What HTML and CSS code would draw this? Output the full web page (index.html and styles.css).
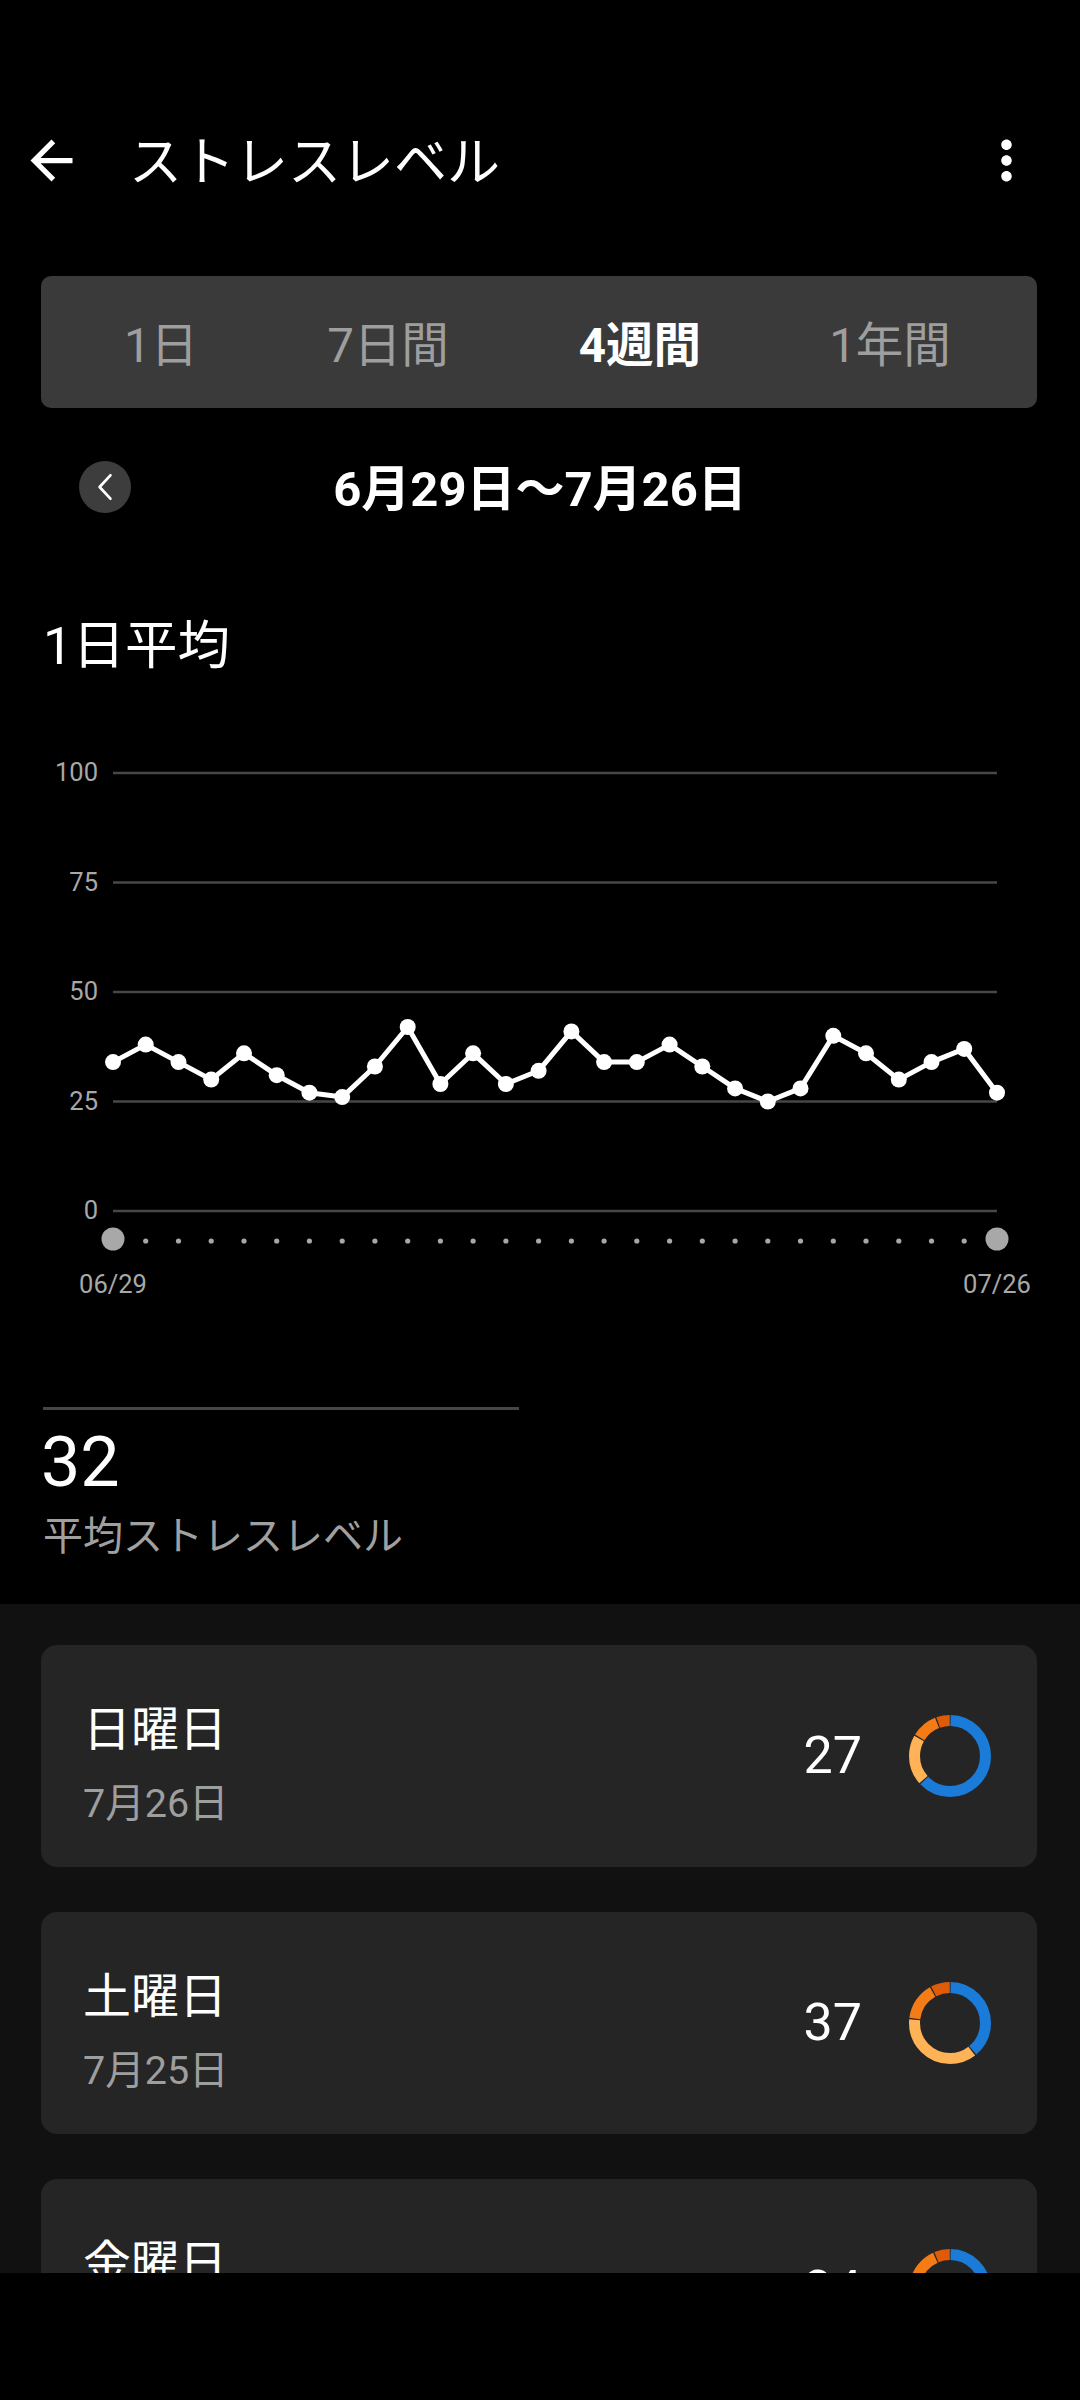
FILE: index.html
```html
<!DOCTYPE html>
<html lang="ja">
<head>
<meta charset="utf-8">
<title>ストレスレベル</title>
<link rel="stylesheet" href="styles.css">
</head>
<body>
<div class="top">
  <header class="appbar">
    <svg class="icon back" viewBox="0 0 24 24" width="63" height="63"><path fill="#fff" d="M20 11H7.83l5.59-5.59L12 4l-8 8 8 8 1.41-1.41L7.83 13H20v-2z"/></svg>
    <h1 class="title">ストレスレベル</h1>
    <svg class="icon more" viewBox="0 0 24 24" width="63" height="63"><path fill="#fff" d="M12 8c1.1 0 2-.9 2-2s-.9-2-2-2-2 .9-2 2 .9 2 2 2zm0 2c-1.1 0-2 .9-2 2s.9 2 2 2 2-.9 2-2-.9-2-2-2zm0 6c-1.1 0-2 .9-2 2s.9 2 2 2 2-.9 2-2-.9-2-2-2z"/></svg>
  </header>

  <nav class="tabs">
    <span class="tab">1日</span>
    <span class="tab">7日間</span>
    <span class="tab active">4週間</span>
    <span class="tab">1年間</span>
  </nav>

  <div class="range">
    <div class="range-left">
      <span class="prev">
        <svg viewBox="0 0 20 30" width="20" height="30"><path d="M16 2 L4 15 L16 28" fill="none" stroke="#fff" stroke-width="3" stroke-linecap="round" stroke-linejoin="round"/></svg>
      </span>
    </div>
    <div class="range-text">6月29日〜7月26日</div>
    <div></div>
  </div>

  <h2 class="section-title">1日平均</h2>

  <svg class="chart" viewBox="0 740 1080 570" width="1080" height="570">
    <g class="grid" stroke="#474747" stroke-width="2.5">
      <line x1="113" y1="773" x2="997" y2="773"/>
      <line x1="113" y1="882.5" x2="997" y2="882.5"/>
      <line x1="113" y1="992" x2="997" y2="992"/>
      <line x1="113" y1="1101.5" x2="997" y2="1101.5"/>
      <line x1="113" y1="1211" x2="997" y2="1211"/>
    </g>
    <g class="ylabels" fill="#a8a8a8" font-size="25.5" text-anchor="end">
      <text x="98" y="781">100</text>
      <text x="98" y="890.5">75</text>
      <text x="98" y="1000">50</text>
      <text x="98" y="1109.5">25</text>
      <text x="98" y="1219">0</text>
    </g>
    <polyline fill="none" stroke="#fff" stroke-width="5" stroke-linejoin="round"
      points="113,1062.1 145.7,1044.6 178.5,1062.1 211.2,1079.6 244,1053.3 276.7,1075.2 309.4,1092.7 342.2,1097.1 374.9,1066.5 407.7,1027 440.4,1084 473.1,1053.3 505.9,1084 538.6,1070.8 571.4,1031.4 604.1,1062.1 636.8,1062.1 669.6,1044.6 702.3,1066.5 735.1,1088.4 767.8,1101.5 800.5,1088.4 833.3,1035.8 866,1053.3 898.8,1079.6 931.5,1062.1 964.2,1048.9 997,1092.7"/>
    <g fill="#fff">
      <circle cx="113" cy="1062.1" r="8"/>
      <circle cx="145.7" cy="1044.6" r="8"/>
      <circle cx="178.5" cy="1062.1" r="8"/>
      <circle cx="211.2" cy="1079.6" r="8"/>
      <circle cx="244" cy="1053.3" r="8"/>
      <circle cx="276.7" cy="1075.2" r="8"/>
      <circle cx="309.4" cy="1092.7" r="8"/>
      <circle cx="342.2" cy="1097.1" r="8"/>
      <circle cx="374.9" cy="1066.5" r="8"/>
      <circle cx="407.7" cy="1027" r="8"/>
      <circle cx="440.4" cy="1084" r="8"/>
      <circle cx="473.1" cy="1053.3" r="8"/>
      <circle cx="505.9" cy="1084" r="8"/>
      <circle cx="538.6" cy="1070.8" r="8"/>
      <circle cx="571.4" cy="1031.4" r="8"/>
      <circle cx="604.1" cy="1062.1" r="8"/>
      <circle cx="636.8" cy="1062.1" r="8"/>
      <circle cx="669.6" cy="1044.6" r="8"/>
      <circle cx="702.3" cy="1066.5" r="8"/>
      <circle cx="735.1" cy="1088.4" r="8"/>
      <circle cx="767.8" cy="1101.5" r="8"/>
      <circle cx="800.5" cy="1088.4" r="8"/>
      <circle cx="833.3" cy="1035.8" r="8"/>
      <circle cx="866" cy="1053.3" r="8"/>
      <circle cx="898.8" cy="1079.6" r="8"/>
      <circle cx="931.5" cy="1062.1" r="8"/>
      <circle cx="964.2" cy="1048.9" r="8"/>
      <circle cx="997" cy="1092.7" r="8"/>
    </g>
    <g fill="#a8a8a8">
      <circle cx="113" cy="1239" r="11.5"/>
      <circle cx="997" cy="1239" r="11.5"/>
      <circle cx="145.7" cy="1241" r="2.6"/>
      <circle cx="178.5" cy="1241" r="2.6"/>
      <circle cx="211.2" cy="1241" r="2.6"/>
      <circle cx="244" cy="1241" r="2.6"/>
      <circle cx="276.7" cy="1241" r="2.6"/>
      <circle cx="309.4" cy="1241" r="2.6"/>
      <circle cx="342.2" cy="1241" r="2.6"/>
      <circle cx="374.9" cy="1241" r="2.6"/>
      <circle cx="407.7" cy="1241" r="2.6"/>
      <circle cx="440.4" cy="1241" r="2.6"/>
      <circle cx="473.1" cy="1241" r="2.6"/>
      <circle cx="505.9" cy="1241" r="2.6"/>
      <circle cx="538.6" cy="1241" r="2.6"/>
      <circle cx="571.4" cy="1241" r="2.6"/>
      <circle cx="604.1" cy="1241" r="2.6"/>
      <circle cx="636.8" cy="1241" r="2.6"/>
      <circle cx="669.6" cy="1241" r="2.6"/>
      <circle cx="702.3" cy="1241" r="2.6"/>
      <circle cx="735.1" cy="1241" r="2.6"/>
      <circle cx="767.8" cy="1241" r="2.6"/>
      <circle cx="800.5" cy="1241" r="2.6"/>
      <circle cx="833.3" cy="1241" r="2.6"/>
      <circle cx="866" cy="1241" r="2.6"/>
      <circle cx="898.8" cy="1241" r="2.6"/>
      <circle cx="931.5" cy="1241" r="2.6"/>
      <circle cx="964.2" cy="1241" r="2.6"/>
    </g>
    <g fill="#a8a8a8" font-size="25.5" text-anchor="middle">
      <text x="113" y="1293">06/29</text>
      <text x="997" y="1293">07/26</text>
    </g>
  </svg>

  <div class="divider"></div>
  <div class="avg-value">32</div>
  <div class="avg-label">平均ストレスレベル</div>
</div>

<section class="days">
  <article class="card">
    <div class="card-text">
      <div class="day">日曜日</div>
      <div class="date">7月26日</div>
    </div>
    <div class="card-right">
      <span class="score">27</span>
      <svg class="donut" viewBox="0 0 82 82" width="82" height="82">
        <g transform="rotate(-90 41 41)" fill="none" stroke-width="11">
          <circle cx="41" cy="41" r="35.5" stroke="#1b7bd8" stroke-dasharray="139.45 223.05" stroke-dashoffset="-0.6"/>
          <circle cx="41" cy="41" r="35.5" stroke="#ffb256" stroke-dasharray="44.03 223.05" stroke-dashoffset="-141.25"/>
          <circle cx="41" cy="41" r="35.5" stroke="#f47c16" stroke-dasharray="22.96 223.05" stroke-dashoffset="-186.48"/>
          <circle cx="41" cy="41" r="35.5" stroke="#e05b08" stroke-dasharray="11.81 223.05" stroke-dashoffset="-210.64"/>
        </g>
      </svg>
    </div>
  </article>

  <article class="card">
    <div class="card-text">
      <div class="day">土曜日</div>
      <div class="date">7月25日</div>
    </div>
    <div class="card-right">
      <span class="score">37</span>
      <svg class="donut" viewBox="0 0 82 82" width="82" height="82">
        <g transform="rotate(-90 41 41)" fill="none" stroke-width="11">
          <circle cx="41" cy="41" r="35.5" stroke="#1b7bd8" stroke-dasharray="86.16 223.05" stroke-dashoffset="-0.6"/>
          <circle cx="41" cy="41" r="35.5" stroke="#ffb256" stroke-dasharray="82.45 223.05" stroke-dashoffset="-87.96"/>
          <circle cx="41" cy="41" r="35.5" stroke="#f47c16" stroke-dasharray="32.88 223.05" stroke-dashoffset="-171.61"/>
          <circle cx="41" cy="41" r="35.5" stroke="#e05b08" stroke-dasharray="16.76 223.05" stroke-dashoffset="-205.69"/>
        </g>
      </svg>
    </div>
  </article>

  <article class="card">
    <div class="card-text">
      <div class="day">金曜日</div>
      <div class="date">7月24日</div>
    </div>
    <div class="card-right">
      <span class="score">34</span>
      <svg class="donut" viewBox="0 0 82 82" width="82" height="82">
        <g transform="rotate(-90 41 41)" fill="none" stroke-width="11">
          <circle cx="41" cy="41" r="35.5" stroke="#1b7bd8" stroke-dasharray="91.74 223.05" stroke-dashoffset="-0.6"/>
          <circle cx="41" cy="41" r="35.5" stroke="#ffb256" stroke-dasharray="79.35 223.05" stroke-dashoffset="-93.54"/>
          <circle cx="41" cy="41" r="35.5" stroke="#f47c16" stroke-dasharray="33.49 223.05" stroke-dashoffset="-174.09"/>
          <circle cx="41" cy="41" r="35.5" stroke="#e05b08" stroke-dasharray="13.67 223.05" stroke-dashoffset="-208.78"/>
        </g>
      </svg>
    </div>
  </article>
</section>

<div class="navbar"></div>
</body>
</html>
```

FILE: styles.css
```css
html, body {
  margin: 0;
  padding: 0;
  background: #000;
  color: #fff;
  font-family: Roboto, "Noto Sans CJK JP", "Noto Sans", sans-serif;
}

body {
  width: 1080px;
  min-height: 2400px;
  overflow: hidden;
}

.top {
  background: #000;
  padding-bottom: 42px;
}

.appbar {
  display: flex;
  align-items: center;
  height: 140px;
  padding-top: 90px;
  padding-left: 20px;
  padding-right: 42px;
}

.icon {
  display: block;
  flex: none;
}

.title {
  margin: 0 0 0 46px;
  padding-top: 5px;
  flex: 1;
  font-size: 53px;
  font-weight: 400;
  line-height: 70px;
  color: #fff;
}

.tabs {
  display: grid;
  grid-template-columns: 240px 214px 290px 210px;
  align-items: center;
  justify-items: center;
  margin: 46px 0 0 41px;
  width: 996px;
  height: 132px;
  background: #3a3a3a;
  border-radius: 10px;
}

.tab {
  font-size: 47.5px;
  color: #9e9e9e;
  line-height: 60px;
  padding-top: 8px;
}

.tab.active {
  color: #fff;
  font-weight: 700;
}

.range {
  display: grid;
  grid-template-columns: 1fr auto 1fr;
  align-items: center;
  height: 80px;
  margin-top: 39px;
}

.range-left {
  padding-left: 79px;
}

.prev {
  display: flex;
  align-items: center;
  justify-content: center;
  width: 52px;
  height: 52px;
  border-radius: 50%;
  background: #3d3d3d;
}

.prev svg {
  display: block;
  width: 18px;
  height: 28px;
}

.range-text {
  font-size: 49px;
  font-weight: 700;
  line-height: 60px;
  padding-top: 5px;
}

.section-title {
  margin: 84px 0 0 43px;
  font-size: 52.5px;
  font-weight: 400;
  line-height: 70px;
}

.chart {
  display: block;
  margin-top: 59px;
  font-family: Roboto, "Noto Sans", sans-serif;
}

.divider {
  margin: 97px 0 0 43px;
  width: 476px;
  height: 3px;
  background: #464646;
}

.avg-value {
  margin: 12px 0 0 41px;
  font-size: 70px;
  line-height: 80px;
  font-weight: 400;
}

.avg-label {
  margin: 10px 0 0 43px;
  font-size: 40px;
  line-height: 50px;
  color: #a0a0a0;
}

.days {
  background: #111;
  padding: 41px 43px 41px 41px;
  display: flex;
  flex-direction: column;
  gap: 45px;
}

.card {
  box-sizing: border-box;
  height: 222px;
  background: #252525;
  border-radius: 16px;
  display: flex;
  align-items: center;
  justify-content: space-between;
  padding: 0 46px 0 42px;
}

.card-text {
  display: flex;
  flex-direction: column;
  padding-top: 18px;
  align-self: flex-start;
  margin-top: 35px;
}

.day {
  font-size: 48px;
  line-height: 64px;
}

.date {
  margin-top: 10px;
  font-size: 39.5px;
  line-height: 64px;
  color: #9e9e9e;
}

.card-right {
  display: flex;
  align-items: center;
}

.score {
  font-size: 52px;
  line-height: 64px;
  margin-right: 47px;
}

.donut {
  display: block;
}

.navbar {
  position: fixed;
  left: 0;
  right: 0;
  bottom: 0;
  height: 127px;
  background: #000;
}
```
